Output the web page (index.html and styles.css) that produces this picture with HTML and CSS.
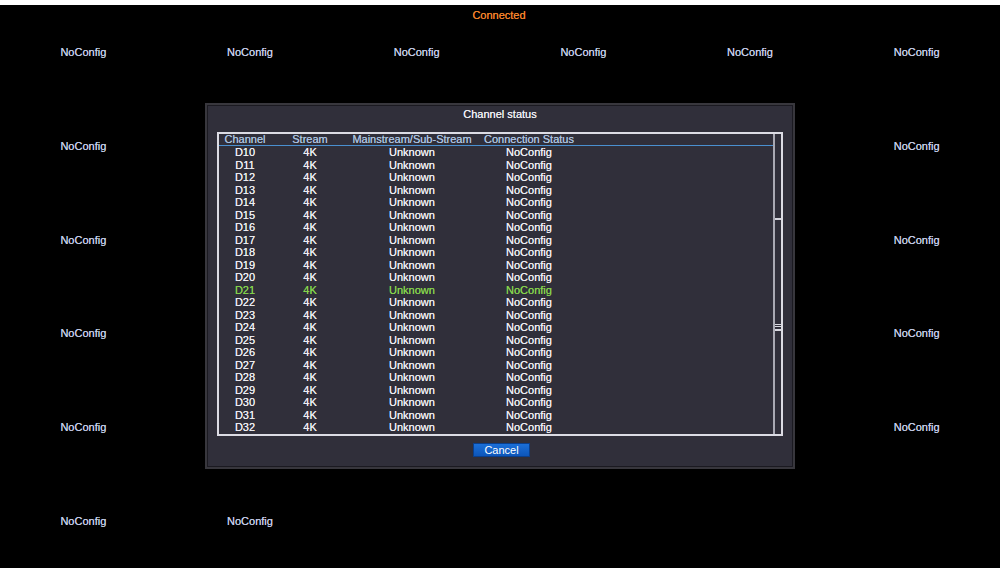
FILE: index.html
```html
<!DOCTYPE html>
<html>
<head>
<meta charset="utf-8">
<link rel="stylesheet" href="styles.css">
</head>
<body>
<div class="screen">
  <div class="cell">NoConfig</div><div class="cell">NoConfig</div><div class="cell">NoConfig</div><div class="cell">NoConfig</div><div class="cell">NoConfig</div><div class="cell">NoConfig</div>
  <div class="cell">NoConfig</div><div class="cell">NoConfig</div><div class="cell">NoConfig</div><div class="cell">NoConfig</div><div class="cell">NoConfig</div><div class="cell">NoConfig</div>
  <div class="cell">NoConfig</div><div class="cell">NoConfig</div><div class="cell">NoConfig</div><div class="cell">NoConfig</div><div class="cell">NoConfig</div><div class="cell">NoConfig</div>
  <div class="cell">NoConfig</div><div class="cell">NoConfig</div><div class="cell">NoConfig</div><div class="cell">NoConfig</div><div class="cell">NoConfig</div><div class="cell">NoConfig</div>
  <div class="cell">NoConfig</div><div class="cell">NoConfig</div><div class="cell">NoConfig</div><div class="cell">NoConfig</div><div class="cell">NoConfig</div><div class="cell">NoConfig</div>
  <div class="cell">NoConfig</div><div class="cell">NoConfig</div>

  <div class="connected">Connected</div>

  <div class="dialog">
    <div class="title">Channel status</div>
    <div class="frame">
      <div class="list">
        <div class="row head"><span>Channel</span><span>Stream</span><span>Mainstream/Sub-Stream</span><span>Connection Status</span></div>
        <div class="row"><span>D10</span><span>4K</span><span>Unknown</span><span>NoConfig</span></div>
        <div class="row"><span>D11</span><span>4K</span><span>Unknown</span><span>NoConfig</span></div>
        <div class="row"><span>D12</span><span>4K</span><span>Unknown</span><span>NoConfig</span></div>
        <div class="row"><span>D13</span><span>4K</span><span>Unknown</span><span>NoConfig</span></div>
        <div class="row"><span>D14</span><span>4K</span><span>Unknown</span><span>NoConfig</span></div>
        <div class="row"><span>D15</span><span>4K</span><span>Unknown</span><span>NoConfig</span></div>
        <div class="row"><span>D16</span><span>4K</span><span>Unknown</span><span>NoConfig</span></div>
        <div class="row"><span>D17</span><span>4K</span><span>Unknown</span><span>NoConfig</span></div>
        <div class="row"><span>D18</span><span>4K</span><span>Unknown</span><span>NoConfig</span></div>
        <div class="row"><span>D19</span><span>4K</span><span>Unknown</span><span>NoConfig</span></div>
        <div class="row"><span>D20</span><span>4K</span><span>Unknown</span><span>NoConfig</span></div>
        <div class="row selected"><span>D21</span><span>4K</span><span>Unknown</span><span>NoConfig</span></div>
        <div class="row"><span>D22</span><span>4K</span><span>Unknown</span><span>NoConfig</span></div>
        <div class="row"><span>D23</span><span>4K</span><span>Unknown</span><span>NoConfig</span></div>
        <div class="row"><span>D24</span><span>4K</span><span>Unknown</span><span>NoConfig</span></div>
        <div class="row"><span>D25</span><span>4K</span><span>Unknown</span><span>NoConfig</span></div>
        <div class="row"><span>D26</span><span>4K</span><span>Unknown</span><span>NoConfig</span></div>
        <div class="row"><span>D27</span><span>4K</span><span>Unknown</span><span>NoConfig</span></div>
        <div class="row"><span>D28</span><span>4K</span><span>Unknown</span><span>NoConfig</span></div>
        <div class="row"><span>D29</span><span>4K</span><span>Unknown</span><span>NoConfig</span></div>
        <div class="row"><span>D30</span><span>4K</span><span>Unknown</span><span>NoConfig</span></div>
        <div class="row"><span>D31</span><span>4K</span><span>Unknown</span><span>NoConfig</span></div>
        <div class="row"><span>D32</span><span>4K</span><span>Unknown</span><span>NoConfig</span></div>
      </div>
      <div class="scroll">
        <div class="track"></div>
        <div class="thumb"><div class="grip"></div></div>
      </div>
    </div>
    <div class="button">Cancel</div>
  </div>
</div>
</body>
</html>
```

FILE: styles.css
```css
html, body {
  margin: 0;
  padding: 0;
  background: #ffffff;
}

body {
  font-family: "Liberation Sans", Arial, sans-serif;
  font-size: 11px;
}

.screen {
  position: relative;
  margin-top: 5px;
  height: 563px;
  background: #000000;
  display: grid;
  grid-template-columns: repeat(6, 1fr);
  grid-template-rows: repeat(6, 1fr);
}

.cell {
  display: flex;
  align-items: center;
  justify-content: center;
  color: #c3cbe6;
  line-height: 13px;
  padding-top: 1px;
  text-shadow: 0 0 0.4px #c3cbe6;
}

.connected {
  position: absolute;
  top: 4px;
  left: 0;
  right: 0;
  text-align: center;
  color: #f3822a;
  line-height: 13px;
  padding-right: 2px;
  text-shadow: 0 0 0.5px #f3822a;
}

.dialog {
  position: absolute;
  left: 205px;
  top: 98px;
  width: 590px;
  height: 366px;
  box-sizing: border-box;
  background: #302f3a;
  border: 2px solid #38373d;
  box-shadow: inset 0 0 0 1px #1b1a21;
  padding: 0 10px;
  display: flex;
  flex-direction: column;
  align-items: center;
}

.title {
  color: #eeeef4;
  line-height: 13px;
  padding-top: 3px;
  margin-bottom: 11px;
  text-shadow: 0 0 0.5px #eeeef4;
}

.frame {
  align-self: stretch;
  height: 304px;
  box-sizing: border-box;
  border: 2px solid #dcdce4;
  display: flex;
}

.list {
  flex: 1;
  overflow: hidden;
}

.row {
  display: grid;
  grid-template-columns: 52px 78px 126px 108px;
  line-height: 12.5px;
  color: #ededf2;
  text-align: center;
  text-shadow: 0 0 0.4px #ededf2;
}

.row.head {
  line-height: 11px;
  color: #a9c0de;
  border-bottom: 1px solid #4a90d0;
  text-shadow: 0 0 0.4px #a9c0de;
}

.row.selected {
  color: #84d24c;
  text-shadow: 0 0 0.4px #84d24c;
}

.scroll {
  width: 6px;
  border-left: 2px solid #a9a9b3;
  display: flex;
  flex-direction: column;
}

.track {
  height: 84px;
}

.thumb {
  flex: 1;
  border-top: 2px solid #d4d4dc;
  display: flex;
  align-items: center;
}

.grip {
  width: 100%;
  height: 5px;
  border-top: 1px solid #d8d8e0;
  border-bottom: 1px solid #d8d8e0;
  background: linear-gradient(#302f3a 0, #302f3a 1px, #d8d8e0 1px, #d8d8e0 2px, #302f3a 2px);
  background-size: 100% 3px;
}

.button {
  margin-top: 7px;
  width: 57px;
  height: 14px;
  box-sizing: border-box;
  background: linear-gradient(#1b6fd8, #0d56ba);
  border: 1px solid #0a3f8c;
  color: #ffffff;
  line-height: 12px;
  text-align: center;
  margin-left: 3px;
}
```
